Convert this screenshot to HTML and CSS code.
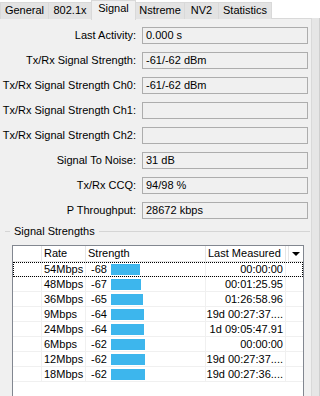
FILE: index.html
```html
<!DOCTYPE html>
<html lang="en">
<head>
  <meta charset="UTF-8">
  <title>Wireless Registration - Signal</title>
  <link rel="stylesheet" href="styles.css">
</head>
<body>
  <div class="tabs">
    <div class="tab tab-general">General</div>
    <div class="tab tab-dot1x">802.1x</div>
    <div class="tab tab-signal selected">Signal</div>
    <div class="tab tab-nstreme">Nstreme</div>
    <div class="tab tab-nv2">NV2</div>
    <div class="tab tab-stats">Statistics</div>
  </div>

  <div class="frame">
    <div class="panel">
      <!-- Signal fields -->
      <div class="fields">
        <div class="label">Last Activity:</div>
        <div class="field">0.000 s</div>
        <div class="label">Tx/Rx Signal Strength:</div>
        <div class="field">-61/-62 dBm</div>
        <div class="label">Tx/Rx Signal Strength Ch0:</div>
        <div class="field">-61/-62 dBm</div>
        <div class="label">Tx/Rx Signal Strength Ch1:</div>
        <div class="field"></div>
        <div class="label">Tx/Rx Signal Strength Ch2:</div>
        <div class="field"></div>
        <div class="label">Signal To Noise:</div>
        <div class="field">31 dB</div>
        <div class="label">Tx/Rx CCQ:</div>
        <div class="field">94/98 %</div>
        <div class="label">P Throughput:</div>
        <div class="field">28672 kbps</div>
      </div>

      <!-- Signal Strengths list -->
      <div class="group-title"><span>Signal Strengths</span></div>
      <div class="list">
        <div class="row head">
          <div class="cell"></div>
          <div class="cell">Rate</div>
          <div class="cell">Strength</div>
          <div class="cell">Last Measured</div>
          <div class="cell menu"><span class="arrow"></span></div>
        </div>
        <div class="row focused">
          <div class="cell"></div>
          <div class="cell">54Mbps</div>
          <div class="cell strength"><span class="dbm">-68</span><span class="bar" style="width:29px"></span></div>
          <div class="cell time">00:00:00</div>
          <div class="cell"></div>
        </div>
        <div class="row">
          <div class="cell"></div>
          <div class="cell">48Mbps</div>
          <div class="cell strength"><span class="dbm">-67</span><span class="bar" style="width:30px"></span></div>
          <div class="cell time">00:01:25.95</div>
          <div class="cell"></div>
        </div>
        <div class="row">
          <div class="cell"></div>
          <div class="cell">36Mbps</div>
          <div class="cell strength"><span class="dbm">-65</span><span class="bar" style="width:32px"></span></div>
          <div class="cell time">01:26:58.96</div>
          <div class="cell"></div>
        </div>
        <div class="row">
          <div class="cell"></div>
          <div class="cell">9Mbps</div>
          <div class="cell strength"><span class="dbm">-64</span><span class="bar" style="width:33px"></span></div>
          <div class="cell time">19d 00:27:37....</div>
          <div class="cell"></div>
        </div>
        <div class="row">
          <div class="cell"></div>
          <div class="cell">24Mbps</div>
          <div class="cell strength"><span class="dbm">-64</span><span class="bar" style="width:33px"></span></div>
          <div class="cell time">1d 09:05:47.91</div>
          <div class="cell"></div>
        </div>
        <div class="row">
          <div class="cell"></div>
          <div class="cell">6Mbps</div>
          <div class="cell strength"><span class="dbm">-62</span><span class="bar" style="width:34px"></span></div>
          <div class="cell time">00:00:00</div>
          <div class="cell"></div>
        </div>
        <div class="row">
          <div class="cell"></div>
          <div class="cell">12Mbps</div>
          <div class="cell strength"><span class="dbm">-62</span><span class="bar" style="width:34px"></span></div>
          <div class="cell time">19d 00:27:37....</div>
          <div class="cell"></div>
        </div>
        <div class="row">
          <div class="cell"></div>
          <div class="cell">18Mbps</div>
          <div class="cell strength"><span class="dbm">-62</span><span class="bar" style="width:34px"></span></div>
          <div class="cell time">19d 00:27:36....</div>
          <div class="cell"></div>
        </div>
      </div>
    </div>
    <div class="side"></div>
  </div>
</body>
</html>
```

FILE: styles.css
```css
body {
  margin: 0;
  width: 320px;
  height: 396px;
  overflow: hidden;
  background: #fff;
  font-family: "Liberation Sans", Arial, sans-serif;
  font-size: 11px;
  color: #000;
}

.tabs {
  display: flex;
  height: 18px;
  position: relative;
  z-index: 1;
}

.tab {
  box-sizing: border-box;
  height: 17px;
  margin-top: 2px;
  line-height: 15px;
  text-align: center;
  background: #e3e3e3;
  border: 1px solid #d9d9d9;
  border-bottom: none;
  margin-right: -1px;
}

.tab-general { width: 49px; }
.tab-dot1x { width: 44px; }
.tab-signal { width: 45px; }
.tab-nstreme { width: 50px; }
.tab-nv2 { width: 35px; }
.tab-stats { width: 54px; }

.tab.selected {
  height: 20px;
  margin-top: 0;
  line-height: 15px;
  background: #f0f0f0;
}

.frame {
  display: flex;
  height: 378px;
}

.panel {
  box-sizing: border-box;
  width: 312px;
  background: #f0f0f0;
  border-top: 1px solid #d9d9d9;
  border-right: 1px solid #d9d9d9;
}

.side {
  flex: 1;
  background: #e6e6e6;
  border-right: 1px solid #cfcfcf;
}

.fields {
  display: grid;
  grid-template-columns: 136px 166px;
  column-gap: 6px;
  row-gap: 8px;
  padding-top: 8px;
}

.label {
  text-align: right;
  line-height: 17px;
  white-space: nowrap;
}

.field {
  box-sizing: border-box;
  height: 17px;
  border: 1px solid #adadad;
  padding-left: 3px;
  line-height: 15px;
  white-space: nowrap;
}

.group-title {
  display: flex;
  align-items: center;
  width: 305px;
  margin: 6px 0 0 5px;
  height: 13px;
  line-height: 13px;
}

.group-title::before,
.group-title::after {
  content: "";
  height: 1px;
  background: #d5d5d5;
}

.group-title::before {
  width: 5px;
}

.group-title::after {
  flex: 1;
}

.group-title span {
  padding: 0 4px;
}

.list {
  box-sizing: border-box;
  width: 292px;
  height: 170px;
  margin: 7px 0 0 12px;
  background: #fff;
  border: 1px solid #828790;
}

.row {
  display: grid;
  grid-template-columns: 29px 44px 120px 80px 1fr;
  height: 15px;
  line-height: 14px;
}

.cell {
  box-sizing: border-box;
  border-right: 1px solid #f0f0f0;
  border-bottom: 1px solid #f0f0f0;
  padding-left: 2px;
  white-space: nowrap;
  overflow: hidden;
}

.cell:last-child {
  border-right: none;
}

.row.head {
  height: 16px;
  line-height: 15px;
}

.head .cell {
  border-right-color: #e5e5e5;
  border-bottom-color: #e5e5e5;
}

.head .menu {
  display: flex;
  justify-content: center;
  align-items: center;
  margin-left: 2px;
  border-left: 1px solid #e5e5e5;
  padding: 0;
}

.arrow {
  width: 0;
  height: 0;
  border-left: 4px solid transparent;
  border-right: 4px solid transparent;
  border-top: 4px solid #000;
}

.row.focused {
  outline: 1px dotted #000;
  outline-offset: -1px;
}

.strength {
  display: flex;
  align-items: center;
  padding-left: 5px;
}

.dbm {
  width: 20px;
}

.bar {
  height: 11px;
  background: #3db6ed;
}

.time {
  text-align: right;
  padding: 0 2px 0 0;
}
```
